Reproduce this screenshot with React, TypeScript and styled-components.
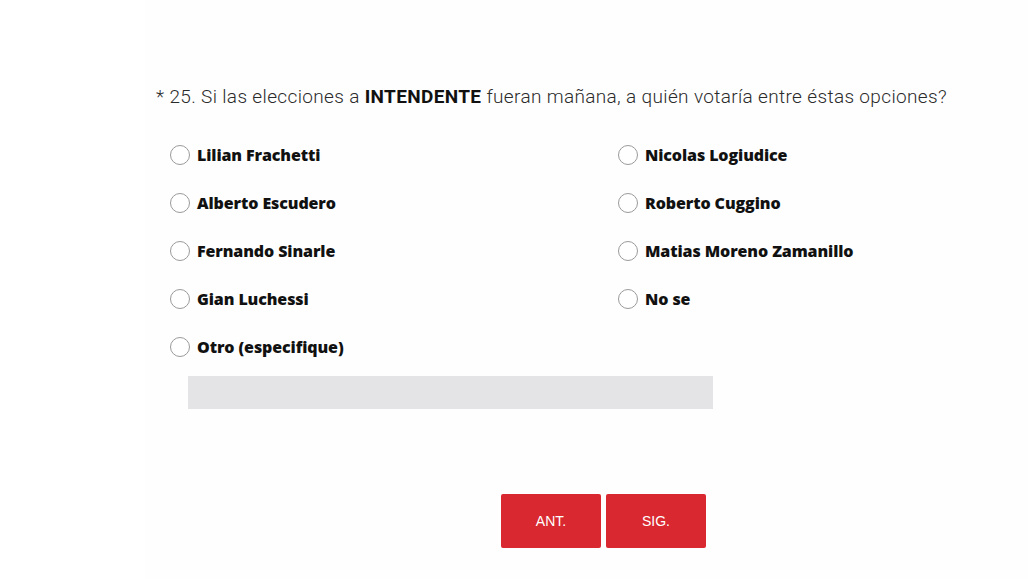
import styled, { createGlobalStyle } from "styled-components";

const GlobalStyle = createGlobalStyle`
  html, body {
    margin: 0;
    padding: 0;
    background: #ffffff;
  }
  * {
    box-sizing: border-box;
  }
`;

const Page = styled.div`
  width: 1028px;
  height: 579px;
  overflow: hidden;
  background: #ffffff;
  font-family: "Roboto", "Liberation Sans", sans-serif;
`;

const Panel = styled.main`
  margin-left: 145px;
  padding: 84px 0 0 11px;
  height: 100%;
  background: #fefefe;
`;

const Question = styled.h2`
  margin: 0;
  font-size: 19px;
  font-weight: 300;
  line-height: 26px;
  color: #2b2b2b;
  letter-spacing: 0.35px;
  white-space: nowrap;

  strong {
    font-weight: 700;
    color: #111;
  }
`;

const Options = styled.div`
  display: grid;
  grid-template-columns: 448px 300px;
  grid-auto-rows: 24px;
  row-gap: 24px;
  margin: 33px 0 0 14px;
`;

const Option = styled.label`
  display: flex;
  align-items: center;
  gap: 7px;
  height: 24px;
  cursor: pointer;
`;

const Radio = styled.span`
  width: 20px;
  height: 20px;
  border: 1px solid #9a9a9a;
  border-radius: 50%;
  background: #fff;
  flex: none;
`;

const Label = styled.span`
  font-family: "Open Sans", "Liberation Sans", sans-serif;
  font-size: 16px;
  font-weight: 800;
  color: #111;
  letter-spacing: -0.1px;
`;

const OtherInput = styled.input`
  display: block;
  width: 525px;
  height: 33px;
  margin: 17px 0 0 32px;
  border: none;
  background: #e4e3e6;
  outline: none;
`;

const Nav = styled.div`
  display: flex;
  gap: 5px;
  margin: 85px 0 0 345px;
`;

const NavButton = styled.button`
  width: 100px;
  height: 54px;
  border: none;
  border-radius: 2px;
  background: #d9282f;
  color: #fff;
  font-family: "Liberation Sans", Arial, sans-serif;
  font-size: 14px;
  cursor: pointer;
`;

const leftCol = [
  "Lilian Frachetti",
  "Alberto Escudero",
  "Fernando Sinarle",
  "Gian Luchessi",
  "Otro (especifique)",
];
const rightCol = [
  "Nicolas Logiudice",
  "Roberto Cuggino",
  "Matias Moreno Zamanillo",
  "No se",
];

export default function App() {
  const cells: (string | null)[] = [];
  leftCol.forEach((name, i) => {
    cells.push(name);
    if (rightCol[i]) cells.push(rightCol[i]);
  });

  return (
    <Page>
      <GlobalStyle />
      <Panel>
        <Question>
          * 25. Si las elecciones a <strong>INTENDENTE</strong> fueran mañana,
          a quién votaría entre éstas opciones?
        </Question>
        <Options>
          {cells.map((name, i) => (
            <Option key={i}>
              <Radio />
              <Label>{name}</Label>
            </Option>
          ))}
        </Options>
        <OtherInput type="text" />
        <Nav>
          <NavButton>ANT.</NavButton>
          <NavButton>SIG.</NavButton>
        </Nav>
      </Panel>
    </Page>
  );
}
